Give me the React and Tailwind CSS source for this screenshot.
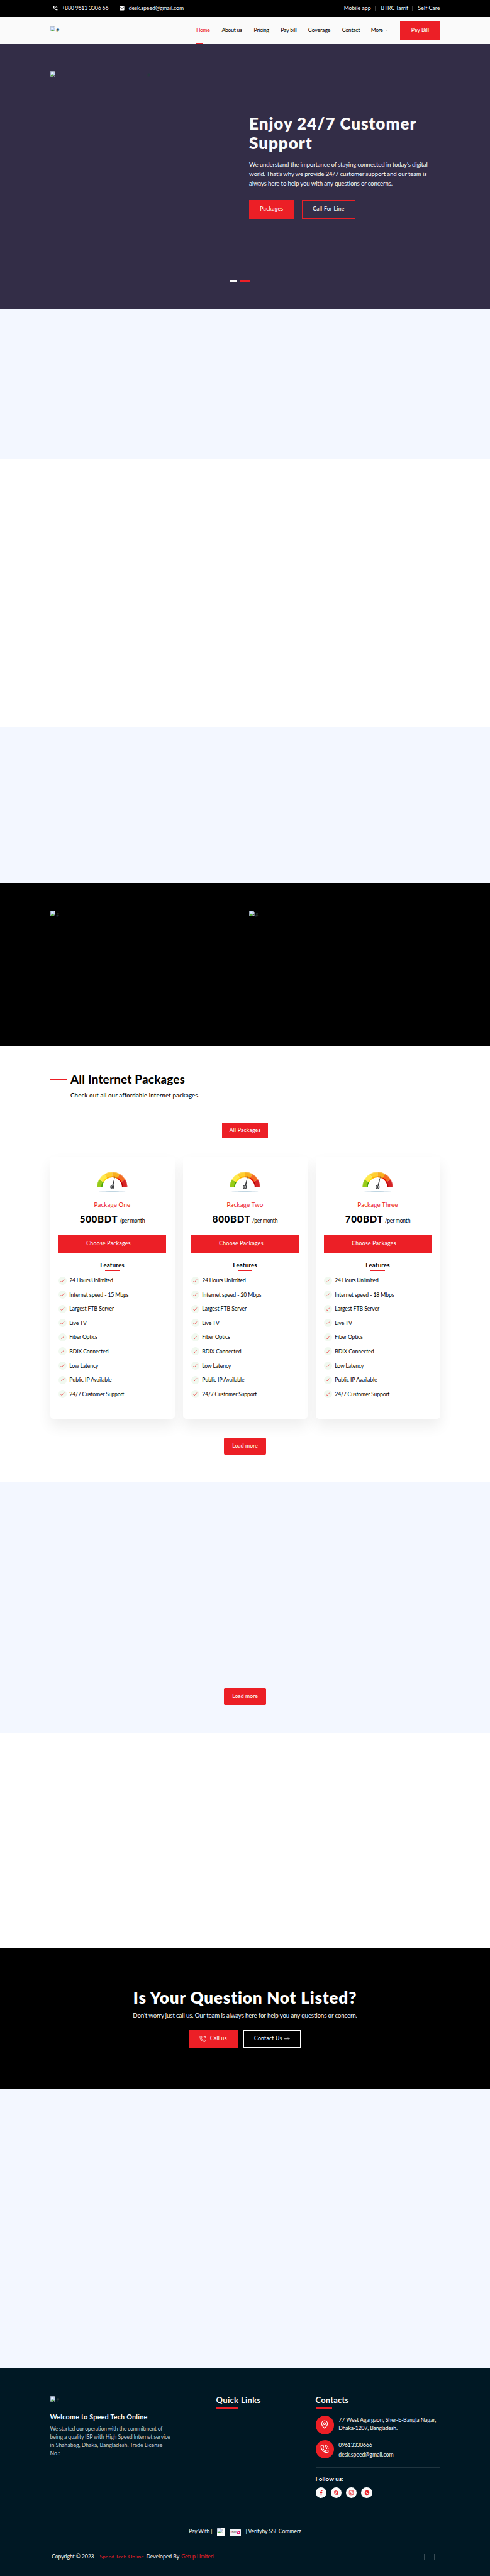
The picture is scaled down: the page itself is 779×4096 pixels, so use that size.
import { MapPin, PhoneCall, PhoneOutgoing } from 'lucide-react';
import { MdPhoneInTalk } from 'react-icons/md';
import { RiFacebookFill, RiSkypeFill, RiInstagramLine, RiWhatsappFill } from 'react-icons/ri';

const navItems = [
  { label: 'Home', cls: 'w-[40.3px] tracking-[-0.054em] text-[#ec1f26]' },
  { label: 'About us', cls: 'w-[51.2px] tracking-[-0.03em]' },
  { label: 'Pricing', cls: 'w-[42.7px] tracking-[-0.029em]' },
  { label: 'Pay bill', cls: 'w-[43.6px] tracking-[-0.021em]' },
  { label: 'Coverage', cls: 'w-[53.8px] tracking-[-0.005em]' },
  { label: 'Contact', cls: 'w-[46px] tracking-[-0.025em]' },
  { label: 'More', cls: 'w-[22.4px] tracking-[-0.043em]' },
];

const packages = [
  { name: 'Package One', nameCls: 'tracking-[0.017em]', price: '500BDT', speed: '15' },
  { name: 'Package Two', nameCls: 'tracking-[0.025em]', price: '800BDT', speed: '20' },
  { name: 'Package Three', nameCls: 'tracking-[0.016em]', price: '700BDT', speed: '18' },
];

const features = (speed) => [
  { label: '24 Hours Unlimited', cls: 'tracking-[-0.034em]' },
  { label: `Internet speed - ${speed} Mbps`, cls: 'tracking-[-0.012em]' },
  { label: 'Largest FTB Server', cls: 'tracking-[-0.008em]' },
  { label: 'Live TV', cls: 'tracking-[-0.014em]' },
  { label: 'Fiber Optics', cls: 'tracking-[-0.018em]' },
  { label: 'BDIX Connected', cls: 'tracking-[-0.014em]' },
  { label: 'Low Latency', cls: 'tracking-[-0.018em]' },
  { label: 'Public IP Available', cls: 'tracking-[-0.009em]' },
  { label: '24/7 Customer Support', cls: 'tracking-[-0.02em]' },
];

const socials = [RiFacebookFill, RiSkypeFill, RiInstagramLine, RiWhatsappFill];

function BrokenImage({ className = '' }) {
  return (
    <svg viewBox="0 0 16 16" className={`block h-[8.7px] w-[8.7px] shrink-0 ${className}`}>
      <path d="M0.5 0.5H11L15.5 5V9L8 15.5H0.5Z" fill="#c3d6f8" stroke="#a3a6ab" />
      <path d="M11 0.5V5H15.5Z" fill="#fff" stroke="#a3a6ab" strokeWidth="0.8" />
      <path d="M2.5 6.5A1.5 1.5 0 0 1 4 5A2 2 0 0 1 7.5 5A1.3 1.3 0 0 1 8 7H3Z" fill="#fff" />
      <path d="M1 15C2 11.5 4.5 10 7 10C8.8 10 10 10.6 11 11.6L7.5 15Z" fill="#56ae38" />
      <path d="M15.5 11.2V15.5H10.8Z" fill="#c9cdd2" stroke="#a3a6ab" strokeWidth="0.6" />
    </svg>
  );
}

function MailIcon() {
  return (
    <svg viewBox="0 0 14 14" className="block h-[7.6px] w-[7.6px] shrink-0">
      <rect width="14" height="14" rx="2.4" fill="#fafafa" />
      <path d="M0.5 3L7 8.8L13.5 3" fill="none" stroke="#000" strokeWidth="1.1" />
    </svg>
  );
}

function point(r, deg) {
  const a = (deg * Math.PI) / 180;
  return `${(45 - r * Math.cos(a)).toFixed(2)} ${(45.5 - r * Math.sin(a)).toFixed(2)}`;
}

function ring(ro, ri, a0, a1) {
  return `M${point(ro, a0)}A${ro} ${ro} 0 0 1 ${point(ro, a1)}L${point(ri, a1)}A${ri} ${ri} 0 0 0 ${point(ri, a0)}Z`;
}

const gaugeColors = [
  ['#97cb17', '#43a00a'],
  ['#ffe94a', '#ffdc00'],
  ['#ffcf30', '#ffae00'],
  ['#f8b01e', '#f07800'],
  ['#f36c22', '#e60000'],
  ['#d62426', '#b80000'],
];

function Gauge() {
  return (
    <svg viewBox="0 0 90 60" className="mx-auto block h-[32.4px] w-[48.7px]">
      {gaugeColors.map(([outer, inner], i) => (
        <g key={outer}>
          <path d={ring(45, 29, i * 30, i * 30 + 30)} fill={outer} />
          <path d={ring(32, 29, i * 30, i * 30 + 30)} fill={inner} />
        </g>
      ))}
      <path d={ring(45, 43.4, 0, 180)} fill="#fff" opacity="0.3" />
      <ellipse cx="45" cy="57.8" rx="39" ry="1.8" fill="#dde8ef" />
      <ellipse cx="45" cy="57.8" rx="20" ry="1.6" fill="#bfd5e1" />
      <path d="M53.8 11.5L47.8 46L43.4 45Z" fill="#303236" />
      <circle cx="45" cy="45.5" r="5.6" fill="#303236" />
      <circle cx="45" cy="45.5" r="3.8" fill="#fff" />
      <circle cx="45" cy="45.5" r="2.8" fill="#303236" />
    </svg>
  );
}

function PackageCard({ name, nameCls, price, speed }) {
  return (
    <div className="h-[416.8px] rounded-[5px] bg-white px-[13.5px] pt-[24px] shadow-[0_12px_22px_rgba(5,5,20,0.07)]">
      <Gauge />
      <h3 className={`mt-[12.9px] h-[14px] text-center text-[9.74px] leading-[14px] font-medium text-[#ec1f26] ${nameCls}`}>{name}</h3>
      <div className="mt-[7.1px] flex h-[18px] items-baseline justify-center gap-[2.5px] leading-[18px]">
        <span className="text-[15.1px] font-black tracking-[0.045em]">{price}</span>
        <span className="text-[8.66px] tracking-[-0.03em]">/per month</span>
      </div>
      <div className="mt-[16.4px] flex h-[28.6px] items-center justify-center bg-[#ec1f26] pr-[12px] text-[8.66px] font-medium tracking-[0.033em] text-[#fafafa]">
        Choose Packages
      </div>
      <h4 className="mt-[11.9px] h-[14px] text-center text-[9.74px] leading-[14px] font-bold tracking-[0.018em]">Features</h4>
      <div className="mx-auto mt-[1.7px] h-px w-[22.5px] bg-[#ec1f26]" />
      <ul className="mt-[4.5px]">
        {features(speed).map(({ label, cls }) => (
          <li key={label} className="flex h-[22.52px] items-center gap-[4.3px]">
            <span className="flex h-[13px] w-[13px] items-center justify-center rounded-full bg-[#f1f9f0]">
              <svg viewBox="0 0 12 10" className="h-[5.4px] w-[6.5px]">
                <path d="M0.8 5.6L4 9L11.2 0.8" fill="none" stroke="#ec1f26" strokeWidth="1.3" />
              </svg>
            </span>
            <span className={`pt-[1px] text-[8.66px] ${cls}`}>{label}</span>
          </li>
        ))}
      </ul>
    </div>
  );
}

function LoadMore() {
  return (
    <div className="mx-auto flex h-[27px] w-[67px] items-center justify-center rounded-[2px] bg-[#ec1f26] text-[8.66px] font-medium tracking-[0.007em] text-[#fafafa]">
      Load more
    </div>
  );
}

export default function App() {
  return (
    <div className="flex h-[4096px] w-[779px] flex-col overflow-hidden bg-white font-['Lato','Noto_Sans',sans-serif] whitespace-nowrap text-black">
      {/* Top bar */}
      <div className="flex h-[26.5px] shrink-0 items-center bg-black px-[79.5px] text-[8.66px] text-[#fafafa]">
        <div className="flex items-center pl-[3.3px]">
          <MdPhoneInTalk className="-mt-[1.5px] h-[9.6px] w-[9.6px]" />
          <span className="ml-[5.8px] w-[91.8px] tracking-[-0.019em]">+880 9613 3306 66</span>
          <MailIcon />
          <span className="ml-[7.2px] tracking-[-0.002em]">desk.speed@gmail.com</span>
        </div>
        <div className="ml-auto flex items-center">
          <span className="tracking-[0.003em]">Mobile app</span>
          <span className="mr-[9px] ml-[6px] h-[8.5px] w-px bg-[#3c3c3c]" />
          <span>BTRC Tarrif</span>
          <span className="mr-[9px] ml-[5.5px] h-[8.5px] w-px bg-[#3c3c3c]" />
          <span className="tracking-[0.012em]">Self Care</span>
        </div>
      </div>

      {/* Header */}
      <header className="flex h-[43.8px] shrink-0 items-center bg-[#fafafa] pl-[79.5px]">
        <div className="flex w-[232.6px] items-center gap-[1px]">
          <BrokenImage className="-mt-[5px]" />
          <span className="text-[8.66px] text-[#26383f]">#</span>
        </div>
        <nav className="flex h-full w-[324.4px] items-center text-[8.66px]">
          {navItems.map(({ label, cls }, i) => (
            <span key={label} className={`relative flex h-full shrink-0 items-center ${cls}`}>
              {label}
              {i === 0 && <span className="absolute bottom-0 left-0 h-[2.2px] w-[11.4px] bg-[#ec1f26]" />}
            </span>
          ))}
          <svg viewBox="0 0 10 6" className="mt-[1px] h-[3px] w-[5px]" fill="none" stroke="currentColor" strokeWidth="1.6">
            <path d="M1 0.8L5 4.8L9 0.8" />
          </svg>
        </nav>
        <div className="flex h-[28.7px] w-[63px] items-center justify-center bg-[#ec1f26] text-[8.66px] font-medium tracking-[0.01em] text-[#fafafa]">
          Pay Bill
        </div>
      </header>

      {/* Hero */}
      <section className="h-[421.7px] shrink-0 bg-[#332d47] pl-[79.5px] text-[#fafafa]">
        <div className="flex">
          <div className="flex w-[316.6px] items-start pt-[43.2px]">
            <BrokenImage />
            <span className="ml-[145.5px] text-[8.66px] leading-[14px] text-[#26383f]">#</span>
          </div>
          <div className="pt-[110.3px]">
            <h1 className="text-[26px] leading-[31.4px] font-extrabold tracking-[0.036em]">
              Enjoy 24/7 Customer
              <br />
              Support
            </h1>
            <p className="mt-[11px] text-[9.74px] leading-[14.6px] tracking-[-0.018em]">
              We understand the importance of staying connected in today's digital
              <br />
              world. That's why we provide 24/7 customer support and our team is
              <br />
              always here to help you with any questions or concerns.
            </p>
            <div className="mt-[20.2px] flex gap-[12.4px] text-[8.66px] font-medium">
              <div className="flex h-[29.2px] w-[71.4px] items-center justify-center bg-[#ec1f26] tracking-[0.028em]">Packages</div>
              <div className="flex h-[29.2px] w-[85px] items-center justify-center border border-[#ec1f26] tracking-[0.03em]">Call For Line</div>
            </div>
          </div>
        </div>
        <div className="mt-[98.4px] ml-[286.7px] flex gap-[4.3px]">
          <span className="h-[2.7px] w-[10.8px] bg-[#fafafa]" />
          <span className="h-[2.7px] w-[16.2px] bg-[#ec1f26]" />
        </div>
      </section>

      <section className="h-[238px] shrink-0 bg-[#f3f7ff]" />
      <section className="h-[426px] shrink-0 bg-white" />
      <section className="h-[247.6px] shrink-0 bg-[#f3f7ff]" />

      {/* Media strip */}
      <section className="flex h-[259.2px] shrink-0 bg-black pt-[44.3px] pl-[79.5px] text-[8.66px] leading-[14px] text-[#26383f]">
        <div className="flex w-[316.5px] items-start gap-[1px]">
          <BrokenImage />
          <span>#</span>
        </div>
        <div className="flex items-start gap-[1px]">
          <BrokenImage />
          <span>#</span>
        </div>
      </section>

      {/* Packages */}
      <section className="h-[693.3px] shrink-0 bg-white px-[79.5px] pt-[41.2px]">
        <div className="flex h-[24px] items-center gap-[6.5px]">
          <span className="mt-[3px] h-[2px] w-[26px] bg-[#ec1f26]" />
          <h2 className="text-[18.9px] font-bold tracking-[0.012em]">All Internet Packages</h2>
        </div>
        <p className="mt-[6.2px] h-[14px] pl-[32.5px] text-[9.74px] leading-[14px] font-medium tracking-[0.013em]">
          Check out all our affordable internet packages.
        </p>
        <div className="mx-auto mt-[37px] flex h-[24.9px] w-[72.5px] items-center justify-center bg-[#ec1f26] text-[8.66px] font-medium tracking-[0.023em] text-[#fafafa]">
          All Packages
        </div>
        <div className="mt-[28.7px] mb-[30.3px] grid grid-cols-3 gap-[13px]">
          {packages.map((p) => (
            <PackageCard key={p.name} {...p} />
          ))}
        </div>
        <LoadMore />
      </section>

      <section className="h-[398.6px] shrink-0 bg-[#f3f7ff] pt-[328.2px]">
        <LoadMore />
      </section>
      <section className="h-[342.7px] shrink-0 bg-white" />

      {/* Question banner */}
      <section className="h-[223.9px] shrink-0 bg-black pt-[63px] text-center text-[#fafafa]">
        <h2 className="h-[32px] text-[26px] leading-[32px] font-extrabold tracking-[0.032em] text-white">Is Your Question Not Listed?</h2>
        <p className="mt-[5px] h-[14px] text-[9.74px] leading-[14px] tracking-[-0.015em]">
          Don't worry just call us. Our team is always here for help you any questions or concern.
        </p>
        <div className="mt-[16.3px] flex justify-center gap-[9.7px] text-[8.66px] font-medium">
          <div className="flex h-[28.7px] w-[76.8px] items-center bg-[#ec1f26] pl-[16.5px]">
            <PhoneOutgoing className="h-[10.2px] w-[10.2px]" strokeWidth={1.8} />
            <span className="ml-[6.5px] tracking-[0.029em]">Call us</span>
          </div>
          <div className="flex h-[28.7px] w-[91px] items-center border border-white pl-[15.8px]">
            <span className="tracking-[0.024em]">Contact Us</span>
            <svg viewBox="0 0 16 10" className="ml-[4px] h-[5.4px] w-[8.7px]" fill="none" stroke="currentColor" strokeWidth="1.5">
              <path d="M0 5H15M11 1L15 5L11 9" />
            </svg>
          </div>
        </div>
      </section>

      <section className="h-[445px] shrink-0 bg-[#f3f7ff]" />

      {/* Footer */}
      <footer className="h-[329.7px] shrink-0 bg-[#001824] px-[79.5px] pt-[42px] text-[8.66px] text-[#fafafa]">
        <div className="flex h-[195.1px]">
          <div className="w-[264px] pt-[1.7px]">
            <div className="flex h-[8.7px] items-start gap-[1px] leading-[14px] text-[#26383f]">
              <BrokenImage />
              <span>#</span>
            </div>
            <h3 className="mt-[17.4px] h-[14px] text-[10.8px] leading-[14px] font-bold tracking-[0.018em]">Welcome to Speed Tech Online</h3>
            <p className="mt-[5.7px] leading-[12.98px] text-[#c6cccf]">
              <span className="tracking-[-0.027em]">We started our operation with the commitment of</span>
              <br />
              <span className="tracking-[-0.01em]">being a quality ISP with High Speed Internet service</span>
              <br />
              <span className="tracking-[0.004em]">in Shahabag, Dhaka, Bangladesh. Trade License</span>
              <br />
              No.:
            </p>
          </div>
          <div className="w-[158px]">
            <h3 className="h-[16px] text-[13px] leading-[16px] font-bold tracking-[0.025em]">Quick Links</h3>
            <div className="mt-[4.1px] h-[1.6px] w-[35.2px] bg-[#ec1f26]" />
          </div>
          <div className="w-[198px]">
            <h3 className="h-[16px] text-[13px] leading-[16px] font-bold tracking-[0.013em]">Contacts</h3>
            <div className="mt-[4.1px] h-[1.6px] w-[26.5px] bg-[#ec1f26]" />
            <div className="mt-[10.8px] flex h-[29.8px] items-start gap-[7px]">
              <span className="flex h-[29.8px] w-[29.8px] items-center justify-center rounded-full bg-[#ec1f26]">
                <MapPin className="-mt-[1px] h-[14px] w-[14px]" strokeWidth={2.2} />
              </span>
              <p className="pt-[0.4px] leading-[13px]">
                77 West Agargaon, Sher-E-Bangla Nagar,
                <br />
                <span className="tracking-[-0.019em]">Dhaka-1207, Bangladesh.</span>
              </p>
            </div>
            <div className="mt-[9.1px] flex h-[29.8px] items-start gap-[7px]">
              <span className="flex h-[29.8px] w-[29.8px] items-center justify-center rounded-full bg-[#ec1f26]">
                <PhoneCall className="-mt-[1px] h-[14px] w-[14px]" strokeWidth={2} />
              </span>
              <p className="pt-[1px] leading-[13px]">
                <span className="block tracking-[-0.021em]">09613330666</span>
                <span className="mt-[2.4px] block tracking-[-0.002em]">desk.speed@gmail.com</span>
              </p>
            </div>
            <div className="mt-[13.5px] h-px bg-[#1f343f]" />
            <h4 className="mt-[9.7px] h-[14px] text-[9.74px] leading-[14px] font-bold tracking-[0.013em]">Follow us:</h4>
            <div className="mt-[7px] flex gap-[7px]">
              {socials.map((Icon, i) => (
                <span key={i} className="flex h-[17.3px] w-[17.3px] items-center justify-center rounded-full bg-[#fafafa] text-[#ec1f26]">
                  <Icon className="h-[9px] w-[9px]" />
                </span>
              ))}
            </div>
          </div>
        </div>
        <div className="h-px bg-[#1f343f]" />
        <div className="mt-[13.2px] flex h-[16px] items-center pl-[220.8px]">
          <span className="w-[44.7px] tracking-[-0.023em]">Pay With |</span>
          <span className="mt-[2px] flex h-[13.5px] w-[13.5px] items-start rounded-[1.5px] bg-white">
            <BrokenImage />
          </span>
          <span className="mt-[2px] ml-[7px] flex h-[12px] w-[17.4px] items-center justify-center gap-[0.5px] rounded-[1.5px] bg-[#eff2f5]">
            <span className="flex w-[8px] justify-center text-[3.4px] leading-none text-[#444]">
              <span className="text-[#e2136e]">b</span>Kash
            </span>
            <svg viewBox="0 0 10 10" className="h-[5.2px] w-[5.2px]">
              <rect width="10" height="10" fill="#e2136e" />
              <path d="M1.5 2L8.5 4.2L5.5 8.3L4 5Z" fill="#fff" />
            </svg>
          </span>
          <span className="ml-[7.6px] tracking-[-0.009em]">| Verifyby SSL Commerz</span>
        </div>
        <div className="mt-[24.6px] flex h-[14px] items-center pl-[2.7px]">
          <span className="w-[76.3px] tracking-[-0.013em]">Copyright © 2023</span>
          <span className="w-[73.9px] text-[8.12px] tracking-[0.032em] text-[#ec1f26]">Speed Tech Online</span>
          <span className="w-[55.9px] tracking-[-0.005em]">Developed By</span>
          <span className="tracking-[-0.027em] text-[#ec1f26]">Getup Limited</span>
          <span className="ml-auto h-[9.2px] w-px bg-[#3a4b54]" />
          <span className="mr-[9px] ml-[14.7px] h-[9.2px] w-px bg-[#3a4b54]" />
        </div>
      </footer>
    </div>
  );
}
